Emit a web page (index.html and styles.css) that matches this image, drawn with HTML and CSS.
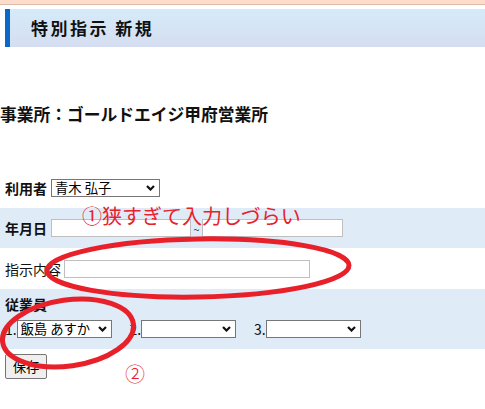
FILE: index.html
```html
<!DOCTYPE html>
<html lang="ja">
<head>
<meta charset="utf-8">
<title>特別指示 新規</title>
<link rel="stylesheet" href="styles.css">
</head>
<body>
<div class="topbar"></div>
<div class="page-head"><h1 class="page-title">特別指示 新規</h1></div>
<h2 class="office">事業所：ゴールドエイジ甲府営業所</h2>
<form class="form">
  <div class="row">
    <span class="label">利用者</span>
    <span class="sel sel-user"><select><option>青木 弘子</option></select><svg class="chev" width="9" height="6" viewBox="0 0 9 6"><polyline points="1,1 4.5,4.5 8,1" fill="none" stroke="#111" stroke-width="2.2"/></svg></span>
  </div>
  <div class="row band">
    <span class="label">年月日</span>
    <input class="text date-from" type="text"><span class="tilde">~</span><input class="text date-to" type="text">
  </div>
  <div class="row row-tall">
    <span class="label label-normal">指示内容</span>
    <input class="text content" type="text">
  </div>
  <div class="staff band">
    <div class="label staff-label">従業員</div>
    <div class="staff-list">
      <span class="num">1.</span><span class="sel sel-staff"><select><option>飯島 あすか</option></select><svg class="chev" width="9" height="6" viewBox="0 0 9 6"><polyline points="1,1 4.5,4.5 8,1" fill="none" stroke="#111" stroke-width="2.2"/></svg></span>
      <span class="num">2.</span><span class="sel sel-staff"><select><option></option></select><svg class="chev" width="9" height="6" viewBox="0 0 9 6"><polyline points="1,1 4.5,4.5 8,1" fill="none" stroke="#111" stroke-width="2.2"/></svg></span>
      <span class="num">3.</span><span class="sel sel-staff"><select><option></option></select><svg class="chev" width="9" height="6" viewBox="0 0 9 6"><polyline points="1,1 4.5,4.5 8,1" fill="none" stroke="#111" stroke-width="2.2"/></svg></span>
    </div>
  </div>
  <button class="save" type="button">保存</button>
</form>
<div class="annot">
  <svg class="annot-svg" width="485" height="409" viewBox="0 0 485 409">
    <ellipse cx="198" cy="268" rx="151" ry="29" transform="rotate(-1 198 268)" fill="none" stroke="#e8202a" stroke-width="5"/>
    <ellipse cx="68" cy="333" rx="66" ry="33" transform="rotate(-8 68 333)" fill="none" stroke="#e8202a" stroke-width="5"/>
  </svg>
  <span class="note note1">①狭すぎて入力しづらい</span>
  <span class="note note2">②</span>
</div>
</body>
</html>
```

FILE: styles.css
```css
* { box-sizing: border-box; }
html, body { margin: 0; padding: 0; }
body {
  font-family: "Noto Sans CJK JP", "Noto Sans", sans-serif;
  color: #111;
  background: #fff;
  position: relative;
  width: 485px;
  height: 409px;
  overflow: hidden;
}
.topbar {
  height: 5px;
  background: #fedcc9;
  border-bottom: 1px solid #d9bcae;
}
.page-head {
  margin: 4px 0 0 5px;
  height: 38px;
  border-left: 5px solid #0a68c9;
  background: linear-gradient(#d5ebf9, #d5def0);
  display: flex;
  align-items: center;
  padding-left: 21px;
}
.page-title {
  margin: 0;
  font-size: 17px;
  font-weight: bold;
  letter-spacing: 2.5px;
  line-height: 20px;
  color: #111;
}
.office {
  margin: 55px 0 42px 0;
  font-size: 16.75px;
  font-weight: bold;
  line-height: 24px;
  color: #111;
}
.form { margin: 0; }
.row {
  display: flex;
  align-items: center;
  height: 40px;
  padding-left: 5px;
}
.row-tall { height: 41px; }
.band { background: #e0ebf8; }
.label {
  font-size: 14px;
  font-weight: bold;
  line-height: 20px;
  margin-right: 4px;
  color: #111;
}
.label-normal { font-weight: normal; margin-right: 3px; }
.text {
  height: 18px;
  border: 1px solid #bfbfbf;
  padding: 0;
  background: #fff;
  margin: 0;
}
.date-from { width: 140px; }
.date-to { width: 141px; }
.tilde {
  width: 11px;
  text-align: center;
  font-size: 11px;
  line-height: 18px;
  padding-top: 2px;
  color: #333;
}
.content { width: 246px; }
.staff {
  height: 60px;
  padding: 5px 0 11px 5px;
}
.staff-label { margin: 0; }
.staff-list {
  display: flex;
  align-items: center;
  height: 18px;
  margin-top: 6px;
}
.num {
  font-size: 14px;
  line-height: 18px;
  width: 11.5px;
  color: #111;
}
.sel {
  position: relative;
  display: inline-block;
  height: 18px;
}
.sel select {
  -webkit-appearance: none;
  appearance: none;
  width: 100%;
  height: 18px;
  margin: 0;
  border: 1px solid #767676;
  border-radius: 0;
  background: #fff;
  font-family: "Noto Sans CJK JP", sans-serif;
  font-size: 13.33px;
  line-height: 16px;
  padding: 0 14px 0 3px;
  color: #000;
  display: block;
}
.chev {
  position: absolute;
  right: 5px;
  top: 6px;
  pointer-events: none;
}
.sel-user { width: 109px; }
.sel-staff { width: 95px; margin-right: 18px; }
.sel-staff:last-child { margin-right: 0; }
.save {
  display: block;
  margin: 5px 0 0 5px;
  width: 42px;
  height: 25px;
  padding: 0;
  font-family: "Noto Sans CJK JP", sans-serif;
  font-size: 13.33px;
  line-height: 20px;
  background: #efefef;
  border: 1px solid #767676;
  border-radius: 2px;
  color: #000;
}
.annot {
  position: absolute;
  left: 0;
  top: 0;
  width: 485px;
  height: 409px;
  pointer-events: none;
}
.annot-svg { position: absolute; left: 0; top: 0; }
.note {
  position: absolute;
  color: #e8202a;
  font-size: 20px;
  line-height: 20px;
  white-space: nowrap;
}
.note1 { left: 82px; top: 206px; }
.note2 { left: 125px; top: 364px; font-weight: 300; }
```
